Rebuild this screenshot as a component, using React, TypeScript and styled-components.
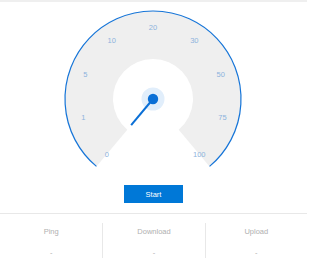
import React from "react";
import styled, { createGlobalStyle } from "styled-components";

const Global = createGlobalStyle`
  html, body { margin: 0; padding: 0; background: #fff; }
  body { font-family: "Liberation Sans", Arial, sans-serif; }
`;

const Wrapper = styled.div`
  width: 307px;
  border-top: 2px solid #efefef;
  display: flex;
  flex-direction: column;
  align-items: center;
`;

const GaugeSvg = styled.svg`
  display: block;
  width: 307px;
  height: 176px;
`;

const StartButton = styled.button`
  margin-top: 7px;
  width: 59px;
  height: 18px;
  border: none;
  background: #0078d7;
  color: #fff;
  font-family: "Liberation Sans", Arial, sans-serif;
  font-size: 7.5px;
  padding: 0;
  cursor: pointer;
`;

const Separator = styled.div`
  align-self: stretch;
  margin-top: 10px;
  border-top: 1px solid #e8e8e8;
`;

const Stats = styled.div`
  align-self: stretch;
  display: grid;
  grid-template-columns: repeat(3, 1fr);
  padding-top: 9px;
`;

const Stat = styled.div<{ $divider?: boolean }>`
  height: 35px;
  display: flex;
  flex-direction: column;
  align-items: center;
  border-left: ${(p) => (p.$divider ? "1px solid #e8e8e8" : "none")};
`;

const StatLabel = styled.div`
  margin-top: 4px;
  font-size: 7.5px;
  line-height: 9px;
  color: #b0b0b0;
`;

const StatValue = styled.div`
  margin-top: 12px;
  font-size: 7.5px;
  line-height: 9px;
  color: #b0b0b0;
`;

const CX = 153;
const CY = 97;
const RO = 88;
const RI = 40;

const pt = (r: number, deg: number) => {
  const a = (deg * Math.PI) / 180;
  return [CX + r * Math.sin(a), CY - r * Math.cos(a)];
};

const labels = ["0", "1", "5", "10", "20", "30", "50", "75", "100"];

export default function App() {
  const [ox1, oy1] = pt(RO, -140);
  const [ox2, oy2] = pt(RO, 140);
  const [ix1, iy1] = pt(RI, -140);
  const [ix2, iy2] = pt(RI, 140);
  const ring = `M ${ox1} ${oy1} A ${RO} ${RO} 0 1 1 ${ox2} ${oy2} L ${ix2} ${iy2} A ${RI} ${RI} 0 1 0 ${ix1} ${iy1} Z`;
  const arc = `M ${ox1} ${oy1} A ${RO} ${RO} 0 1 1 ${ox2} ${oy2}`;
  const [nx, ny] = pt(34, -140);
  return (
    <>
      <Global />
      <Wrapper>
        <GaugeSvg viewBox="0 0 307 176">
          <path d={ring} fill="#efefef" />
          <path d={arc} fill="none" stroke="#1675d8" strokeWidth={1.2} />
          {labels.map((l, i) => {
            const [x, y] = pt(72, -140 + i * 35);
            return (
              <text
                key={l}
                x={x}
                y={y}
                textAnchor="middle"
                dominantBaseline="central"
                fontSize="7.5"
                fontFamily="Liberation Sans, Arial, sans-serif"
                fill="#8db3dd"
              >
                {l}
              </text>
            );
          })}
          <circle cx={CX} cy={CY} r={11.5} fill="#e1eefb" />
          <line x1={CX} y1={CY} x2={nx} y2={ny} stroke="#0a6fd6" strokeWidth={2} />
          <circle cx={CX} cy={CY} r={5.2} fill="#0a6fd6" />
        </GaugeSvg>
        <StartButton>Start</StartButton>
        <Separator />
        <Stats>
          <Stat>
            <StatLabel>Ping</StatLabel>
            <StatValue>-</StatValue>
          </Stat>
          <Stat $divider>
            <StatLabel>Download</StatLabel>
            <StatValue>-</StatValue>
          </Stat>
          <Stat $divider>
            <StatLabel>Upload</StatLabel>
            <StatValue>-</StatValue>
          </Stat>
        </Stats>
      </Wrapper>
    </>
  );
}
